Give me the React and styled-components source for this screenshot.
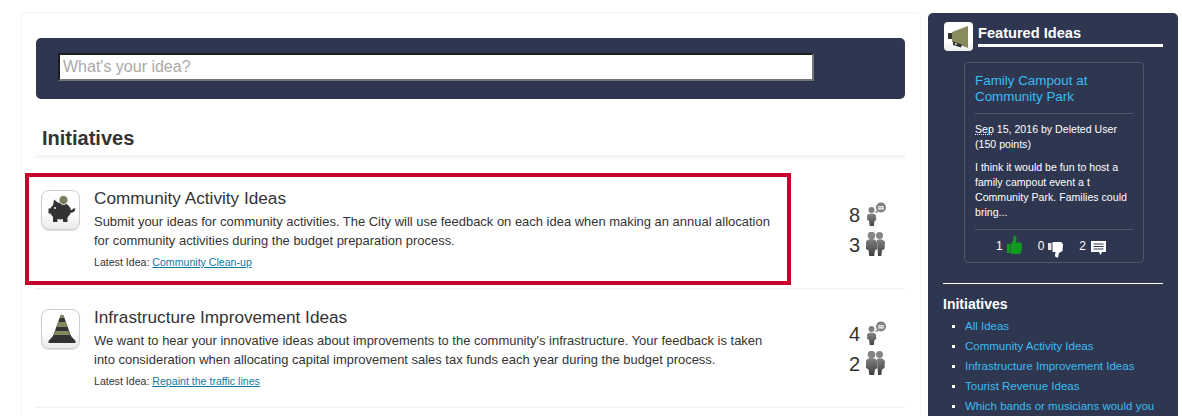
import React from "react";
import styled, { createGlobalStyle } from "styled-components";

const navy = "#2f3650";
const linkBlue = "#3abcf2";

const GlobalStyle = createGlobalStyle`
    html, body {
        margin: 0;
        height: 416px;
        overflow: hidden;
        background: #fff;
        font-family: "Liberation Sans", Arial, sans-serif;
        color: #333;
    }
`;

const Page = styled.div`
    display: flex;
    align-items: stretch;
    gap: 7px;
    height: 416px;
    box-sizing: border-box;
    padding: 12px 4px 0 20px;
`;

const Main = styled.main`
    width: 901px;
    flex: none;
    border: 1px solid #f4f4f4;
    border-bottom: none;
    border-radius: 4px 4px 0 0;
    padding: 25px 15px 0;
    box-sizing: border-box;
`;

const SearchBar = styled.form`
    height: 61px;
    margin: 0;
    background: ${navy};
    border-radius: 5px;
    padding: 15px 91px 0 22px;
    box-sizing: border-box;
`;

const SearchInput = styled.input`
    display: block;
    width: 100%;
    height: 28px;
    box-sizing: border-box;
    border-width: 2px;
    border-style: solid;
    border-color: #1d1d1d #767676 #767676 #1d1d1d;
    padding: 1px 3px;
    font: 16px "Liberation Sans", Arial, sans-serif;
    background: #fff;
    &::placeholder {
        color: #a9a9a9;
        opacity: 1;
    }
`;

const Heading = styled.h2`
    margin: 0;
    padding: 26px 6px 5px;
    height: 59px;
    box-sizing: border-box;
    font-size: 20px;
    line-height: 26px;
    font-weight: 700;
    color: #333;
    border-bottom: 3px solid #f4f4f4;
`;

const RowList = styled.div`
    margin-top: 12px;
`;

const Row = styled.article`
    position: relative;
    display: flex;
    height: 119px;
    box-sizing: border-box;
    padding: 20px 15px 0 5px;
    border-bottom: 1px solid #f2f2f2;
`;

const Highlight = styled.div`
    position: absolute;
    left: -11px;
    top: 3px;
    width: 766px;
    height: 112px;
    box-sizing: border-box;
    border: 4px solid #c8012b;
    pointer-events: none;
`;

const IconTile = styled.div`
    flex: none;
    width: 39px;
    height: 40px;
    box-sizing: border-box;
    border: 1px solid #cfcfcf;
    border-radius: 8px;
    background: linear-gradient(#fff 55%, #e9e9e9);
    box-shadow: 0 1px 1px #ddd;
    display: flex;
    align-items: center;
    justify-content: center;
`;

const RowBody = styled.div`
    width: 690px;
    margin-left: 14px;
    flex: none;
`;

const RowTitle = styled.h3`
    margin: -3px 0 0;
    font-size: 17.2px;
    line-height: 22px;
    font-weight: 400;
    color: #333;
`;

const RowText = styled.p`
    margin: 3px 0 0;
    font-size: 12.96px;
    line-height: 19px;
    color: #333;
`;

const Latest = styled.div`
    margin-top: 5px;
    font-size: 10.6px;
    line-height: 14px;
    color: #333;
    a {
        color: #0f7ba5;
        text-decoration: underline;
    }
`;

const Stats = styled.div`
    padding-top: 10px;
    display: grid;
    grid-template-columns: auto 24px;
    grid-auto-rows: 30px;
    column-gap: 6px;
    align-items: center;
    align-content: start;
    justify-content: end;
    flex: 1;
`;

const StatNumber = styled.span`
    font-size: 20px;
    line-height: 24px;
    color: #333;
    text-align: right;
`;

const Sidebar = styled.aside`
    width: 250px;
    margin-top: 1px;
    flex: none;
    background: ${navy};
    border-radius: 5px 5px 0 0;
    box-sizing: border-box;
    padding: 9px 15px 0 15px;
    color: #fff;
`;

const SideHeader = styled.div`
    display: flex;
    gap: 5px;
    padding-left: 1px;
`;

const HeaderTile = styled.div`
    width: 29px;
    height: 29px;
    flex: none;
    border-radius: 4px;
    background: linear-gradient(#fff 65%, #eee);
    display: flex;
    align-items: center;
    justify-content: center;
`;

const SideTitle = styled.h2`
    flex: 1;
    margin: 0;
    height: 22px;
    font-size: 14.6px;
    line-height: 23px;
    font-weight: 700;
    color: #fff;
    border-bottom: 3px solid #fff;
`;

const Card = styled.section`
    width: 180px;
    height: 201px;
    margin: 11px 0 0 21px;
    box-sizing: border-box;
    border: 1px solid #50566c;
    border-radius: 4px;
    padding: 10px 10px 0;
`;

const CardTitle = styled.a`
    display: block;
    font-size: 13.4px;
    line-height: 16px;
    color: ${linkBlue};
    padding-bottom: 8px;
    border-bottom: 1px solid #50566c;
`;

const CardMeta = styled.div`
    margin-top: 8px;
    font-size: 10.6px;
    line-height: 15px;
    color: #fff;
    abbr {
        text-decoration: underline dotted;
    }
`;

const CardText = styled.p`
    margin: 8px 0 0;
    height: 69px;
    font-size: 10.6px;
    line-height: 15px;
    color: #fff;
    border-bottom: 1px solid #50566c;
`;

const Votes = styled.div`
    display: flex;
    align-items: center;
    justify-content: center;
    gap: 16px;
    height: 32px;
    padding-right: 6px;
    font-size: 12px;
    color: #fff;
`;

const Vote = styled.span`
    display: flex;
    align-items: center;
    gap: ${(p) => p.$gap || 4}px;
`;

// icons sit a little off the number line in the reference
const VoteIcon = styled.span`
    display: flex;
    margin-top: ${(p) => p.$drop}px;
`;

const SideRule = styled.div`
    height: 1px;
    margin: 20px 0 0;
    background: #fff;
`;

const SideHeading = styled.h3`
    margin: 11px 0 0;
    font-size: 14px;
    line-height: 18px;
    font-weight: 700;
    color: #fff;
`;

const SideList = styled.ul`
    margin: 3px 0 0;
    padding: 0 0 0 22px;
    list-style: square;
    font-size: 11.5px;
    line-height: 20px;
    li::marker {
        color: #fff;
        font-size: 10px;
    }
    a {
        color: ${linkBlue};
    }
`;

const PigIcon = () => (
    <svg width="30" height="30" viewBox="0 0 30 30">
        <ellipse cx="14.500" cy="16" rx="10.500" ry="8.500" fill="#333" />
        <path d="M2.500 13.500h4v5h-4zM7 11l1-6.500 5 4zM7 21h4.500v6H7zM17 21h4.500v6H17z" fill="#333" />
        <path d="M24 15q2.500.5 3-1.500h2.500q-.5 4-5 4.500z" fill="#333" />
        <circle cx="9" cy="13" r="1" fill="#fff" />
        <circle cx="17.500" cy="5" r="4.500" fill="#7d7d5c" stroke="#fff" strokeWidth="0.8" />
    </svg>
);

const ConeIcon = () => (
    <svg width="30" height="30" viewBox="0 0 30 30">
        <path d="M14.500 1.500q1.500-1.500 3 0L25 22l4.500 5v2H2.500v-2L7 22z" fill="#333" />
        <path d="M14.500 1.500q1.500-1.500 3 0L18.500 4h-5zM12.200 8h7.600L21.500 13h-11zM9.200 17h13.600l1.340 4H7.860z" fill="#85875c" />
    </svg>
);

const MegaphoneIcon = () => (
    <svg width="29" height="29" viewBox="0 0 29 29">
        <path d="M4 11h4v6H4z" fill="#333" />
        <path d="M8 10L24 4v22L8 20z" fill="#8a8b5c" />
        <path d="M9 19.500l9 3-1 3-8-2.500z" fill="#333" />
        <circle cx="12" cy="22" r="0.900" fill="#ddd" />
    </svg>
);

const PersonIdeaIcon = () => (
    <svg width="24" height="26" viewBox="0 0 24 26">
        <defs>
            <linearGradient id="personFade" x1="0" y1="0" x2="0" y2="1">
                <stop offset="0" stopColor="#888" />
                <stop offset="1" stopColor="#444" />
            </linearGradient>
        </defs>
        <circle cx="5.500" cy="8" r="3" fill="#808080" />
        <path d="M1 14q0-2.500 4.500-2.500t4.500 2.500l.3 4-1.800 1-.6 5H3.700l-.6-5-1.800-1z" fill="url(#personFade)" />
        <circle cx="15" cy="5.500" r="5" fill="#808080" />
        <path d="M11 8.500l-2.500 2.500 4-.8z" fill="#808080" />
        <path d="M12 4.200h6v1.200h-6zM12 6.200h6v1.200h-6z" fill="#fff" />
    </svg>
);

const PeopleIcon = () => (
    <svg width="24" height="26" viewBox="0 0 24 26">
        <defs>
            <linearGradient id="peopleFade" x1="0" y1="0" x2="0" y2="1">
                <stop offset="0" stopColor="#808080" />
                <stop offset="1" stopColor="#3f3f3f" />
            </linearGradient>
        </defs>
        <circle cx="13.500" cy="3.500" r="3.500" fill="#858585" />
        <path d="M11 8q3-1.500 6 0l2 2-.5 7-2.500 1.500-.7 5.500H12z" fill="url(#peopleFade)" />
        <circle cx="5.500" cy="3.500" r="3.800" fill="#858585" />
        <path d="M0 10q1-3 5.500-3t5.500 3l.5 7-2.500 1.500-.8 5.500H3.300l-.8-5.500L0 17z" fill="url(#peopleFade)" />
    </svg>
);

const ThumbUp = () => (
    <svg width="15" height="18" viewBox="0 0 15 18">
        <path d="M0 8h3.500v9H0z" fill="#149a22" />
        <path d="M4 8l2.500-4V0q2.800-.5 3 2L9 6.500h4.500L15 8l-.7 8-1.500 2H4z" fill="#119a20" />
    </svg>
);

const ThumbDown = () => (
    <svg width="15" height="16" viewBox="0 0 15 16">
        <path d="M0 1h3.500v7H0z" fill="#e4e4e4" />
        <path d="M4.500 0H13l2 2-.5 7-3.500 2-1 4.500q-3 .5-3-2l.5-3.500H4.500z" fill="#fff" />
    </svg>
);

const CommentIcon = () => (
    <svg width="15" height="14" viewBox="0 0 15 14">
        <path d="M0 0h15v11h-4l-1.500 3L8 11H0z" fill="#fff" />
        <path d="M2.500 2.500h10v1h-10zM2.500 5h10v1h-10zM2.500 7.500h10v1h-10z" fill="#2f3650" />
    </svg>
);

const IdeaRow = ({ icon, title, text, latest, ideas, people, highlighted }) => (
    <Row>
        {highlighted && <Highlight />}
        <IconTile>{icon}</IconTile>
        <RowBody>
            <RowTitle>{title}</RowTitle>
            <RowText>{text}</RowText>
            <Latest>
                Latest Idea: <a href="#latest">{latest}</a>
            </Latest>
        </RowBody>
        <Stats>
            <StatNumber>{ideas}</StatNumber>
            <PersonIdeaIcon />
            <StatNumber>{people}</StatNumber>
            <PeopleIcon />
        </Stats>
    </Row>
);

const initiatives = [
    "All Ideas",
    "Community Activity Ideas",
    "Infrastructure Improvement Ideas",
    "Tourist Revenue Ideas",
    "Which bands or musicians would you",
];

const App = () => (
    <Page>
        <GlobalStyle />
        <Main>
            <SearchBar>
                <SearchInput placeholder="What's your idea?" />
            </SearchBar>
            <Heading>Initiatives</Heading>
            <RowList>
                <IdeaRow
                    highlighted
                    icon={<PigIcon />}
                    title="Community Activity Ideas"
                    text="Submit your ideas for community activities. The City will use feedback on each idea when making an annual allocation for community activities during the budget preparation process."
                    latest="Community Clean-up"
                    ideas={8}
                    people={3}
                />
                <IdeaRow
                    icon={<ConeIcon />}
                    title="Infrastructure Improvement Ideas"
                    text="We want to hear your innovative ideas about improvements to the community's infrastructure. Your feedback is taken into consideration when allocating capital improvement sales tax funds each year during the budget process."
                    latest="Repaint the traffic lines"
                    ideas={4}
                    people={2}
                />
            </RowList>
        </Main>
        <Sidebar>
            <SideHeader>
                <HeaderTile><MegaphoneIcon /></HeaderTile>
                <SideTitle>Featured Ideas</SideTitle>
            </SideHeader>
            <Card>
                <CardTitle>Family Campout at Community Park</CardTitle>
                <CardMeta>
                    <abbr>Sep</abbr> 15, 2016 by Deleted User (150 points)
                </CardMeta>
                <CardText>
                    I think it would be fun to host a family campout event a t Community Park. Families could bring...
                </CardText>
                <Votes>
                    <Vote>1 <VoteIcon $drop={-3}><ThumbUp /></VoteIcon></Vote>
                    <Vote>0 <VoteIcon $drop={7}><ThumbDown /></VoteIcon></Vote>
                    <Vote $gap={5}>2 <VoteIcon $drop={4}><CommentIcon /></VoteIcon></Vote>
                </Votes>
            </Card>
            <SideRule />
            <SideHeading>Initiatives</SideHeading>
            <SideList>
                {initiatives.map((name) => (
                    <li key={name}><a>{name}</a></li>
                ))}
            </SideList>
        </Sidebar>
    </Page>
);

export default App;
